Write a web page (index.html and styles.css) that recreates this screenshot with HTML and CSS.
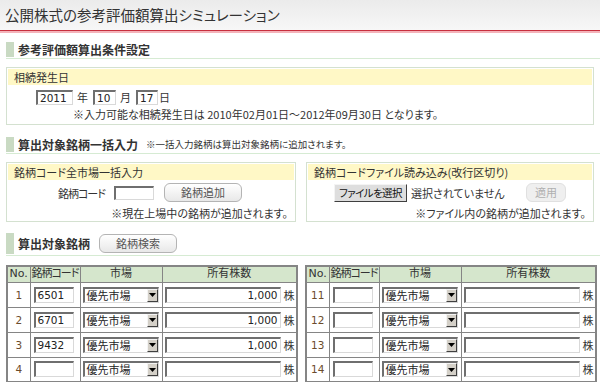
FILE: index.html
```html
<!DOCTYPE html>
<html lang="ja">
<head>
<meta charset="utf-8">
<title>公開株式の参考評価額算出シミュレーション</title>
<link rel="stylesheet" href="styles.css">
</head>
<body>
<header class="title">公開株式の参考評価額算出シミュレーション</header>
<main class="content">
  <section>
    <h2 class="sec-head"><span class="sec-bar"><span class="sec-title">参考評価額算出条件設定</span></span></h2>
    <div class="box box-date">
      <div class="box-head">相続発生日</div>
      <div class="date-row">
        <span class="field w-year">2011</span><span class="unit">年</span>
        <span class="field w-month">10</span><span class="unit">月</span>
        <span class="field w-day">17</span><span class="unit unit-last">日</span>
      </div>
      <p class="note date-note">※入力可能な相続発生日は 2010年02月01日～2012年09月30日 となります。</p>
    </div>
  </section>

  <section>
    <h2 class="sec-head sec-2"><span class="sec-bar"><span class="sec-title">算出対象銘柄一括入力</span><span class="sec-note">※一括入力銘柄は算出対象銘柄に追加されます。</span></span></h2>
    <div class="import-grid">
      <div class="box">
        <div class="box-head">銘柄コード全市場一括入力</div>
        <div class="code-row">
          <span class="label">銘柄コード</span>
          <span class="field w-code-in"></span>
          <button class="btn-round btn-add" type="button">銘柄追加</button>
        </div>
        <p class="note note-right">※現在上場中の銘柄が追加されます。</p>
      </div>
      <div class="box">
        <div class="box-head">銘柄コードファイル読み込み(改行区切り)</div>
        <div class="file-row">
          <button class="btn-file" type="button">ファイルを選択</button>
          <span class="file-status">選択されていません</span>
          <button class="btn-round btn-apply" type="button" disabled>適用</button>
        </div>
        <p class="note note-right">※ファイル内の銘柄が追加されます。</p>
      </div>
    </div>
  </section>

  <section>
    <h2 class="sec-head sec-3"><span class="sec-bar"><span class="sec-title">算出対象銘柄</span><button class="btn-round btn-search" type="button">銘柄検索</button></span></h2>
    <div class="tables">
      <table class="stock-table">
        <colgroup><col class="c-no"><col class="c-code"><col class="c-mkt"><col class="c-qty"></colgroup>
        <thead><tr><th>No.</th><th class="th-code">銘柄コード</th><th>市場</th><th>所有株数</th></tr></thead>
        <tbody>
          <tr><td class="no">1</td><td class="code"><span class="field w-code">6501</span></td><td class="mkt"><span class="sel"><span class="sel-text">優先市場</span><span class="sel-btn"><svg width="7" height="4" viewBox="0 0 7 4"><path d="M0 0H7L3.5 4Z" fill="#000"/></svg></span></span></td><td class="qty"><span class="field w-qty">1,000</span><span class="unit-kabu">株</span></td></tr>
          <tr><td class="no">2</td><td class="code"><span class="field w-code">6701</span></td><td class="mkt"><span class="sel"><span class="sel-text">優先市場</span><span class="sel-btn"><svg width="7" height="4" viewBox="0 0 7 4"><path d="M0 0H7L3.5 4Z" fill="#000"/></svg></span></span></td><td class="qty"><span class="field w-qty">1,000</span><span class="unit-kabu">株</span></td></tr>
          <tr><td class="no">3</td><td class="code"><span class="field w-code">9432</span></td><td class="mkt"><span class="sel"><span class="sel-text">優先市場</span><span class="sel-btn"><svg width="7" height="4" viewBox="0 0 7 4"><path d="M0 0H7L3.5 4Z" fill="#000"/></svg></span></span></td><td class="qty"><span class="field w-qty">1,000</span><span class="unit-kabu">株</span></td></tr>
          <tr><td class="no">4</td><td class="code"><span class="field w-code"></span></td><td class="mkt"><span class="sel"><span class="sel-text">優先市場</span><span class="sel-btn"><svg width="7" height="4" viewBox="0 0 7 4"><path d="M0 0H7L3.5 4Z" fill="#000"/></svg></span></span></td><td class="qty"><span class="field w-qty"></span><span class="unit-kabu">株</span></td></tr>
        </tbody>
      </table>
      <table class="stock-table">
        <colgroup><col class="c-no"><col class="c-code"><col class="c-mkt"><col class="c-qty"></colgroup>
        <thead><tr><th>No.</th><th class="th-code">銘柄コード</th><th>市場</th><th>所有株数</th></tr></thead>
        <tbody>
          <tr><td class="no">11</td><td class="code"><span class="field w-code"></span></td><td class="mkt"><span class="sel"><span class="sel-text">優先市場</span><span class="sel-btn"><svg width="7" height="4" viewBox="0 0 7 4"><path d="M0 0H7L3.5 4Z" fill="#000"/></svg></span></span></td><td class="qty"><span class="field w-qty"></span><span class="unit-kabu">株</span></td></tr>
          <tr><td class="no">12</td><td class="code"><span class="field w-code"></span></td><td class="mkt"><span class="sel"><span class="sel-text">優先市場</span><span class="sel-btn"><svg width="7" height="4" viewBox="0 0 7 4"><path d="M0 0H7L3.5 4Z" fill="#000"/></svg></span></span></td><td class="qty"><span class="field w-qty"></span><span class="unit-kabu">株</span></td></tr>
          <tr><td class="no">13</td><td class="code"><span class="field w-code"></span></td><td class="mkt"><span class="sel"><span class="sel-text">優先市場</span><span class="sel-btn"><svg width="7" height="4" viewBox="0 0 7 4"><path d="M0 0H7L3.5 4Z" fill="#000"/></svg></span></span></td><td class="qty"><span class="field w-qty"></span><span class="unit-kabu">株</span></td></tr>
          <tr><td class="no">14</td><td class="code"><span class="field w-code"></span></td><td class="mkt"><span class="sel"><span class="sel-text">優先市場</span><span class="sel-btn"><svg width="7" height="4" viewBox="0 0 7 4"><path d="M0 0H7L3.5 4Z" fill="#000"/></svg></span></span></td><td class="qty"><span class="field w-qty"></span><span class="unit-kabu">株</span></td></tr>
        </tbody>
      </table>
    </div>
  </section>
</main>
</body>
</html>
```

FILE: styles.css
```css
* { box-sizing: border-box; }

html { overflow: hidden; }

body {
  margin: 0;
  font-family: "Noto Sans CJK JP", "Noto Sans", sans-serif;
  font-size: 11px;
  color: #333;
  background: #fff;
  font-feature-settings: "palt";
}

.title {
  height: 31px;
  line-height: 30px;
  padding-left: 5px;
  font-size: 14.5px;
  color: #333;
  background: linear-gradient(#ebebeb, #f7f7f7);
  border-bottom: 1px solid #c72f3e;
  box-shadow: 0 2px 0 #f4b3ba;
}

.content { padding: 0 6px; }

/* section headings */
.sec-head {
  margin: 11px -6px 0 0;
  padding-bottom: 1px;
  border-bottom: 1px solid #d6ebd3;
  font-size: 12px;
  font-weight: bold;
  line-height: 15px;
}
.sec-bar {
  display: flex;
  align-items: center;
  border-left: 8px solid #c9dac3;
  padding-left: 4px;
  height: 15px;
}
.sec-title { line-height: 15px; }
.sec-2 { margin-top: 12px; }
.sec-3 { margin-top: 11px; }
.sec-3 .sec-bar { height: 21px; }

.sec-note {
  margin-left: 8px;
  font-size: 9.5px;
  font-weight: normal;
  line-height: 15px;
}

/* boxes */
.box {
  border: 1px solid #d4e1d0;
  padding: 1px;
  background: #fff;
  line-height: 14px;
}
.box-date { margin-top: 8px; }
.box-head {
  background: #fff8c6;
  line-height: 16px;
  height: 16px;
  padding-left: 6px;
}

.note { margin: 0; line-height: 14px; height: 14px; }

/* date */
.date-row {
  display: flex;
  align-items: center;
  height: 20px;
  padding: 5px 0 0 28px;
}
.unit { margin: 0 5px 0 4px; line-height: 15px; }
.unit-last { margin-left: 1px; }
.date-note { margin-top: 2px; padding: 0 0 0 65px; height: 16px; }

/* input-like fields */
.field {
  display: inline-block;
  height: 16px;
  border-style: solid;
  border-width: 2px 1px 1px 2px;
  border-color: #6f6f6f #d9d9d9 #d9d9d9 #6f6f6f;
  background: #fff;
  font-family: "DejaVu Sans", "Noto Sans CJK JP", sans-serif;
  font-size: 10.5px;
  line-height: 13px;
  padding: 0 2px;
  color: #222;
  vertical-align: middle;
}
.w-year { width: 37px; height: 15px; line-height: 12px; }
.w-month { width: 23px; height: 15px; line-height: 12px; }
.w-day { width: 22px; height: 15px; line-height: 12px; }
.w-code-in { width: 40px; height: 14px; }
.w-code { width: 40px; }
.w-qty { width: 116px; text-align: right; }

/* import boxes */
.import-grid {
  display: grid;
  grid-template-columns: 290px 288px;
  gap: 10px;
  margin-top: 8px;
}
.code-row {
  display: flex;
  align-items: center;
  height: 19px;
  margin-top: 3px;
  padding-left: 50px;
}
.label { letter-spacing: -1px; }
.code-row .field { margin-left: 9px; }
.btn-add { margin-left: 10px; width: 78px; }

.note-right {
  margin-top: 4px;
  text-align: right;
  padding-right: 6px;
}

.file-row {
  display: flex;
  align-items: center;
  height: 19px;
  margin-top: 3px;
  padding-left: 26px;
  padding-right: 26px;
}
.file-status { margin-left: 4px; color: #333; }

/* buttons */
.btn-round {
  height: 19px;
  padding: 0;
  border: 1px solid #b4b4b4;
  border-radius: 6px;
  background: linear-gradient(#ffffff, #e8e8e8);
  color: #555;
  font-family: "Noto Sans CJK JP", sans-serif;
  font-size: 11px;
  line-height: 17px;
  font-feature-settings: "palt";
  text-align: center;
}
.btn-apply {
  margin-left: auto;
  width: 40px;
  background: #efefef;
  border-color: #e0e0e0;
  color: #b0b0b0;
}
.btn-search {
  margin-left: 9px;
  width: 78px;
  font-weight: normal;
}
.btn-file {
  width: 73px;
  height: 18px;
  padding: 0;
  background: #dedede;
  border: 1px solid;
  border-color: #f4f4f4 #3f3f3f #3f3f3f #f4f4f4;
  font-family: "Noto Sans CJK JP", sans-serif;
  font-size: 10.5px;
  letter-spacing: -0.6px;
  line-height: 16px;
  font-feature-settings: "palt";
  color: #111;
  white-space: nowrap;
}

/* tables */
.tables {
  display: grid;
  grid-template-columns: 290px 290px;
  gap: 9px;
  margin-top: 9px;
}
.stock-table {
  width: 290px;
  table-layout: fixed;
  border-collapse: collapse;
  border: 2px solid #858585;
  font-family: "DejaVu Sans", "Noto Sans CJK JP", sans-serif;
  font-size: 11px;
}
.c-no { width: 23px; }
.c-code { width: 50px; }
.c-mkt { width: 82px; }
.c-qty { width: 135px; }

.stock-table th {
  background: #d5e6cc;
  border: 1px solid #858585;
  font-weight: normal;
  height: 16px;
  line-height: 14px;
  padding: 0;
  color: #333;
  white-space: nowrap;
  overflow: hidden;
}
.stock-table th.th-code { letter-spacing: -1px; }
.stock-table td {
  border: 1px solid #858585;
  height: 25px;
  padding: 0;
  vertical-align: middle;
  white-space: nowrap;
}
.stock-table td.no {
  text-align: center;
  color: #6b4c2c;
  font-size: 10.5px;
}
.stock-table td.code { padding-left: 3px; }
.stock-table td.mkt { padding-left: 2px; }
.stock-table td.qty { padding-left: 2px; }
.unit-kabu {
  margin-left: 3px;
  font-family: "Noto Sans CJK JP", sans-serif;
  vertical-align: middle;
}

/* select-like */
.sel {
  display: inline-flex;
  width: 76px;
  height: 16px;
  border-style: solid;
  border-width: 2px 1px 1px 2px;
  border-color: #6f6f6f #d9d9d9 #d9d9d9 #6f6f6f;
  background: #fff;
  vertical-align: middle;
}
.sel-text {
  flex: 1;
  padding-left: 2px;
  font-size: 11px;
  line-height: 13px;
  color: #222;
  font-family: "Noto Sans CJK JP", sans-serif;
}
.sel-btn {
  width: 11px;
  display: flex;
  align-items: center;
  justify-content: center;
  background: #d4d0c8;
  border: 1px solid;
  border-color: #f4f4f4 #404040 #404040 #f4f4f4;
}
.sel-btn svg { display: block; }
```
